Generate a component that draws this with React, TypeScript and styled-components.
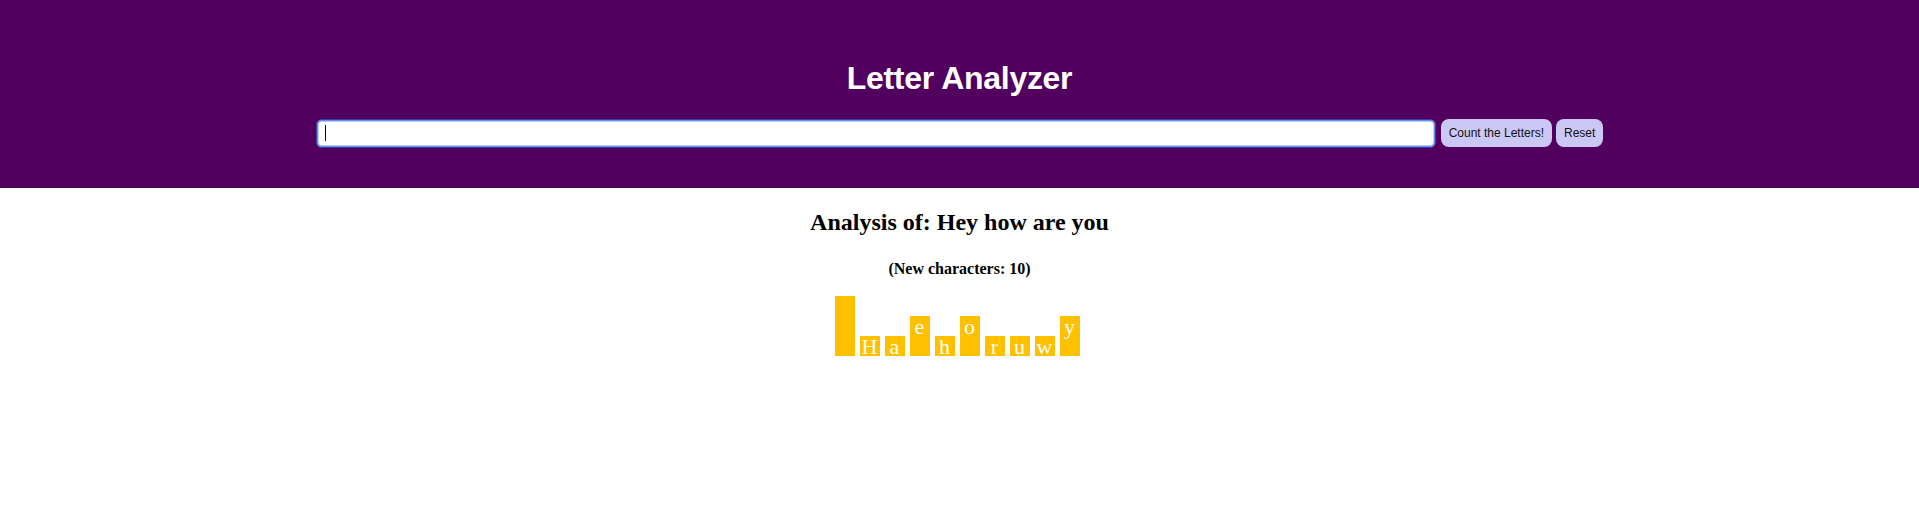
import React from "react";
import styled, { createGlobalStyle } from "styled-components";

const GlobalStyle = createGlobalStyle`
  html, body { margin: 0; padding: 0; background: #ffffff; }
  body { font-family: "Liberation Serif", "Times New Roman", serif; }
`;

const Header = styled.header`
  background: #520060;
  padding: 60px 0 40px;
  display: flex;
  flex-direction: column;
  align-items: center;
`;

const Title = styled.h1`
  margin: 0;
  font-family: "Liberation Sans", Arial, sans-serif;
  font-size: 32px;
  line-height: 37px;
  font-weight: 700;
  color: #ffffff;
  letter-spacing: -0.3px;
`;

const Form = styled.form`
  margin-top: 22px;
  display: flex;
  align-items: flex-start;
  justify-content: center;
`;

const InputWrap = styled.div`
  position: relative;
  margin-right: 5px;
`;

const TextInput = styled.input`
  box-sizing: border-box;
  display: block;
  width: 1120px;
  height: 29px;
  margin: 0;
  padding: 0 8px;
  border: 1px solid #3a3cae;
  border-radius: 6px;
  box-shadow: inset 0 0 0 1px #6f8fe0, inset 0 0 0 2px #b4d0f8;
  background: #ffffff;
  font-family: "Liberation Sans", Arial, sans-serif;
  font-size: 14px;
  color: #000;
  outline: none;
  caret-color: transparent;
`;

const Caret = styled.span`
  position: absolute;
  left: 9px;
  top: 6px;
  width: 1px;
  height: 16px;
  background: #000000;
  pointer-events: none;
`;

const Button = styled.button<{ $gap?: number }>`
  box-sizing: border-box;
  height: 28px;
  margin: 0 ${(p) => p.$gap ?? 0}px 0 0;
  padding: 0 8px;
  border: none;
  border-radius: 8px;
  background: #cbc8f6;
  color: #111111;
  font-family: "Liberation Sans", Arial, sans-serif;
  font-size: 12px;
  cursor: pointer;
`;

const Main = styled.main`
  display: flex;
  flex-direction: column;
  align-items: center;
`;

const Heading = styled.h2`
  margin: 20px 0 0;
  font-family: "Liberation Serif", "Times New Roman", serif;
  font-size: 24px;
  line-height: 28px;
  font-weight: 700;
  color: #000;
`;

const SubHeading = styled.h4`
  margin: 24px 0 0;
  font-family: "Liberation Serif", "Times New Roman", serif;
  font-size: 16px;
  line-height: 18px;
  font-weight: 700;
  color: #000;
`;

const Chart = styled.div`
  margin-top: 18px;
  display: flex;
  align-items: flex-end;
  justify-content: center;
`;

const Bar = styled.div<{ $count: number }>`
  width: 20px;
  height: ${(p) => p.$count * 20}px;
  margin-right: 5px;
  background: #ffc000;
  color: #ffffff;
  font-family: "Liberation Serif", "Times New Roman", serif;
  font-size: 22px;
  line-height: 21px;
  text-align: center;
  white-space: pre;
`;

const phrase = "Hey how are you";

function countLetters(text: string): [string, number][] {
  const map = new Map<string, number>();
  for (const ch of text) map.set(ch, (map.get(ch) ?? 0) + 1);
  return Array.from(map.entries()).sort((a, b) =>
    a[0] < b[0] ? -1 : a[0] > b[0] ? 1 : 0
  );
}

export default function App() {
  const counts = countLetters(phrase);
  return (
    <>
      <GlobalStyle />
      <Header>
        <Title>Letter Analyzer</Title>
        <Form onSubmit={(e) => e.preventDefault()}>
          <InputWrap>
            <TextInput type="text" defaultValue="" aria-label="Text to analyze" />
            <Caret />
          </InputWrap>
          <Button type="submit" $gap={4}>
            Count the Letters!
          </Button>
          <Button type="button">Reset</Button>
        </Form>
      </Header>
      <Main>
        <Heading>Analysis of: {phrase}</Heading>
        <SubHeading>(New characters: {counts.length})</SubHeading>
        <Chart>
          {counts.map(([ch, n]) => (
            <Bar key={ch} $count={n}>
              {ch}
            </Bar>
          ))}
        </Chart>
      </Main>
    </>
  );
}
